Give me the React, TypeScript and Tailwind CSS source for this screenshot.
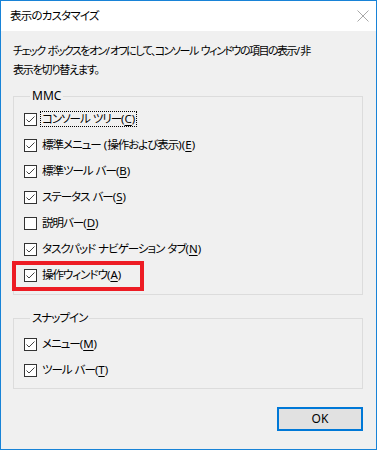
import React from "react"

const font = "font-['Noto_Sans','Noto_Sans_CJK_JP',sans-serif] [font-feature-settings:'palt']"

// Japanese runs get tight tracking, spaces and Latin keep normal tracking
function J({ text, t = "tracking-[-1px]" }: { text: string; t?: string }) {
  const parts = text.split(/([ ()\/A-Za-z]+)/)
  return (
    <>
      {parts.map((p, i) =>
        i % 2 ? (
          <span key={i} className="tracking-normal">{p}</span>
        ) : (
          <span key={i} className={t}>{p}</span>
        )
      )}
    </>
  )
}

function Check({ checked }: { checked: boolean }) {
  return (
    <svg width="13" height="13" viewBox="0 0 13 13" className="shrink-0">
      <rect x="0.5" y="0.5" width="12" height="12" fill="#fff" stroke="#333" />
      {checked && <path d="M2.5 6.5 L5 9 L10.5 3.5" fill="none" stroke="#444" strokeWidth="1" />}
    </svg>
  )
}

function Item({
  label,
  acc,
  checked = true,
  focus = false,
  mark = false,
}: {
  label: string
  acc: string
  checked?: boolean
  focus?: boolean
  mark?: boolean
}) {
  const text = (
    <>
      <J text={label} />
      (<span className="underline underline-offset-2">{acc}</span>)
    </>
  )
  return (
    <div className="relative flex h-[26px] items-center gap-[3px] text-[11.5px]">
      <Check checked={checked} />
      {focus ? (
        <span className="border border-dotted border-black px-[1px] leading-[14px]">{text}</span>
      ) : (
        <span className="px-[2px] leading-[14px]">{text}</span>
      )}
      {mark && (
        <div className="absolute left-[-12px] top-[-1px] h-[30px] w-[132px] border-4 border-[#ed1c24]" />
      )}
    </div>
  )
}

export default function App() {
  return (
    <div className={`flex h-[450px] w-[377px] flex-col border border-[#1883d7] bg-[#f0f0f0] text-[12px] text-black ${font}`}>
      <div className="flex h-[30px] items-center justify-between bg-white pl-[9px] pr-[7px]">
        <span className="text-[11.5px] tracking-[-0.8px]">表示のカスタマイズ</span>
        <svg width="12" height="12" viewBox="0 0 12 12">
          <path d="M0.5 0.5 L11.5 11.5 M11.5 0.5 L0.5 11.5" stroke="#a8a8a8" strokeWidth="1" />
        </svg>
      </div>

      <div className="flex flex-col pl-[12px] pr-[13px] pt-[10px]">
        <p className="w-[330px] whitespace-nowrap text-[11px] leading-[19px]">
          <J text="チェック ボックスをオン/オフにして、コンソール ウィンドウの項目の表示/非" t="tracking-[-1.5px]" />
          <br />
          <J text="表示を切り替えます。" t="tracking-[-1.2px]" />
        </p>

        <fieldset className="mt-[10px] border border-[#dcdcdc] pb-[6px] pl-[10px]">
          <legend className="ml-[6px] px-[2px] leading-[14px]">MMC</legend>
          <div className="flex flex-col pt-[3px]">
            <Item label="コンソール ツリー" acc="C" focus />
            <Item label="標準メニュー (操作および表示)" acc="E" />
            <Item label="標準ツール バー" acc="B" />
            <Item label="ステータス バー" acc="S" />
            <Item label="説明バー" acc="D" checked={false} />
            <Item label="タスクパッド ナビゲーション タブ" acc="N" />
            <Item label="操作ウィンドウ" acc="A" mark />
          </div>
        </fieldset>

        <fieldset className="mt-[16px] border border-[#dcdcdc] pb-[5px] pl-[10px]">
          <legend className="ml-[6px] px-[2px] text-[11.5px] leading-[14px] tracking-[-1px]">スナップイン</legend>
          <div className="flex flex-col pt-[6px]">
            <Item label="メニュー" acc="M" />
            <Item label="ツール バー" acc="T" />
          </div>
        </fieldset>

        <div className="mt-[18px] flex justify-end">
          <button className="h-[24px] w-[86px] border-2 border-[#0078d7] bg-[#e1e1e1] text-[12px]">OK</button>
        </div>
      </div>
    </div>
  )
}
